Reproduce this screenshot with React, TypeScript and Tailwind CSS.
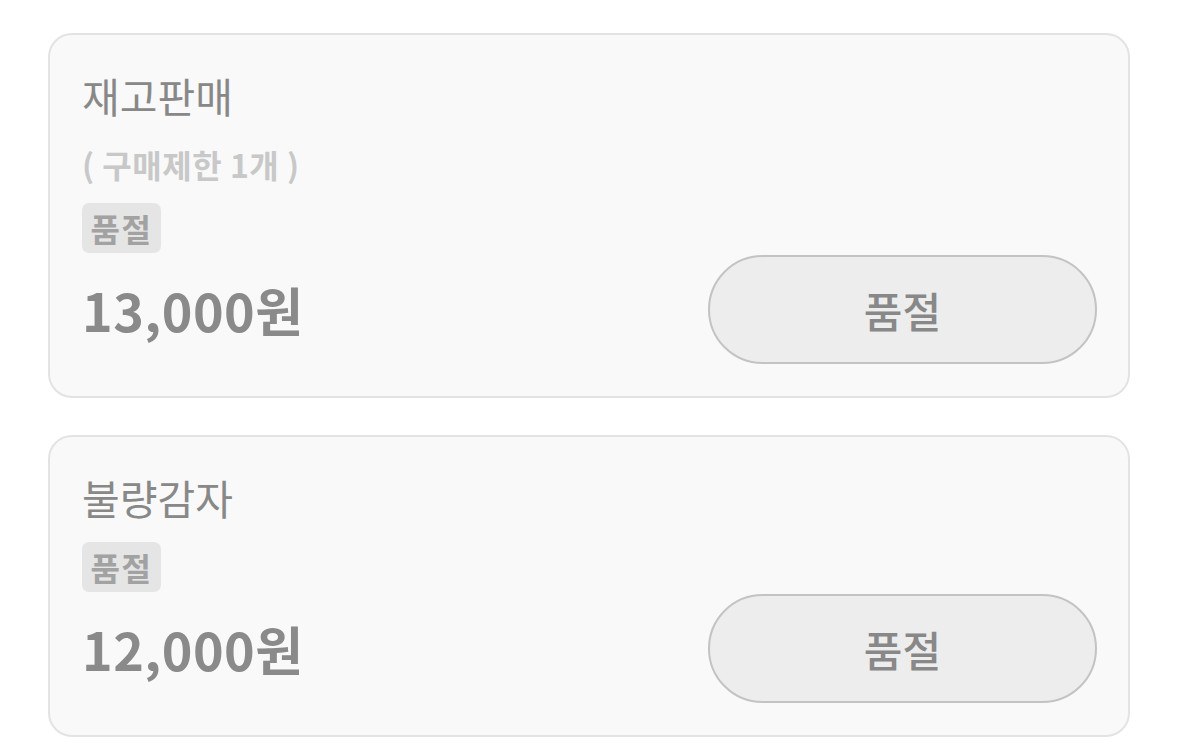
type Item = {
  name: string;
  limit?: string;
  price: string;
};

const items: Item[] = [
  { name: "재고판매", limit: "( 구매제한 1개 )", price: "13,000원" },
  { name: "불량감자", price: "12,000원" },
];

function SoldOutBadge() {
  return (
    <span className="inline-flex h-[50px] w-[79px] items-center justify-center rounded-[7px] bg-[#e5e5e5] text-[32px] font-bold tracking-[1.5px] text-[#a2a2a2]">
      품절
    </span>
  );
}

function ProductCard({ item }: { item: Item }) {
  return (
    <div className="rounded-[24px] border-2 border-[#e3e3e3] bg-[#f9f9f9] pl-[32px] pr-[31px] pt-[30px] pb-[32px]">
      <div className="text-[41px] leading-[60px] text-[#888888]">{item.name}</div>
      {item.limit && (
        <div className="mt-[15px] text-[32px] font-bold leading-[48px] tracking-[0.5px] text-[#c8c8c8]">
          {item.limit}
        </div>
      )}
      <div className="mt-[15px] flex">
        <SoldOutBadge />
      </div>
      <div className="mt-[2px] flex items-center justify-between">
        <span className="text-[52px] font-bold leading-none tracking-[0.5px] text-[#8a8a8a]">
          {item.price}
        </span>
        <button className="flex h-[109px] w-[389px] items-center justify-center rounded-full border-2 border-[#c3c3c3] bg-[#ededed] text-[42px] font-medium text-[#888888]">
          품절
        </button>
      </div>
    </div>
  );
}

export default function App() {
  return (
    <div
      className="min-h-screen bg-white pl-[48px] pr-[49px] pt-[33px]"
      style={{ fontFamily: '"Noto Sans CJK KR", "Noto Sans", sans-serif' }}
    >
      <div className="flex flex-col gap-[37px]">
        {items.map((item) => (
          <ProductCard key={item.name} item={item} />
        ))}
      </div>
    </div>
  );
}
